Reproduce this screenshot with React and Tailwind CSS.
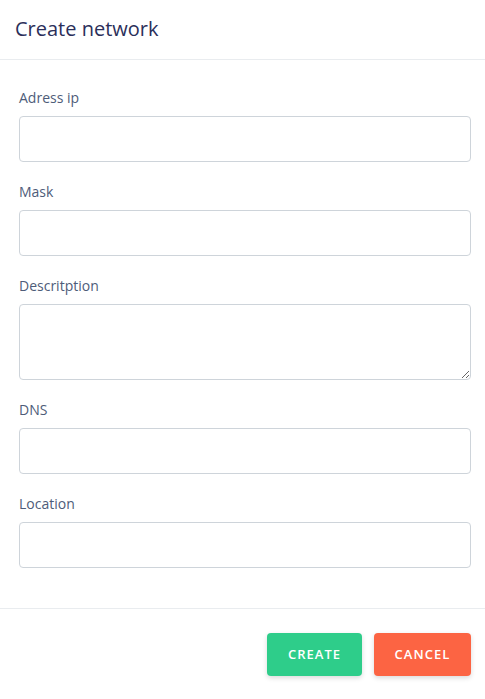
export default function App() {
  const fields = [
    { label: "Adress ip" },
    { label: "Mask" },
    { label: "Descritption", area: true },
    { label: "DNS" },
    { label: "Location" },
  ];
  return (
    <div className="w-[485px] h-[699px] bg-white font-['Open_Sans',sans-serif]">
      <div className="h-[60px] flex items-center pl-[15px] border-b border-[#e9ecef]">
        <h1 className="text-[20px] leading-[26px] -mt-[1px] text-[#2b2f5a] font-normal">Create network</h1>
      </div>
      <div className="pl-[19px] pr-[14px] pt-[29px] pb-[40px] flex flex-col gap-[21px]">
        {fields.map((f) => (
          <div key={f.label} className="flex flex-col">
            <label className="text-[14px] leading-[18px] text-[#4e5c79] mb-[9px]">{f.label}</label>
            {f.area ? (
              <textarea className="h-[76px] w-full border border-[#ced4da] rounded-[4px] outline-none px-3 py-2 text-sm" />
            ) : (
              <input className="h-[46px] w-full border border-[#ced4da] rounded-[4px] outline-none px-3 text-sm" />
            )}
          </div>
        ))}
      </div>
      <div className="border-t border-[#e9ecef] pt-[24px] pr-[14px] flex justify-end gap-[12px]">
        <button className="h-[43px] w-[95px] rounded-[4px] bg-[#2ecd8a] text-white text-[13px] font-semibold tracking-[0.08em] shadow-[0_2px_5px_rgba(0,0,0,0.15)]">
          CREATE
        </button>
        <button className="h-[43px] w-[97px] rounded-[4px] bg-[#fc6443] text-white text-[13px] font-semibold tracking-[0.08em] shadow-[0_2px_5px_rgba(0,0,0,0.15)]">
          CANCEL
        </button>
      </div>
    </div>
  );
}
